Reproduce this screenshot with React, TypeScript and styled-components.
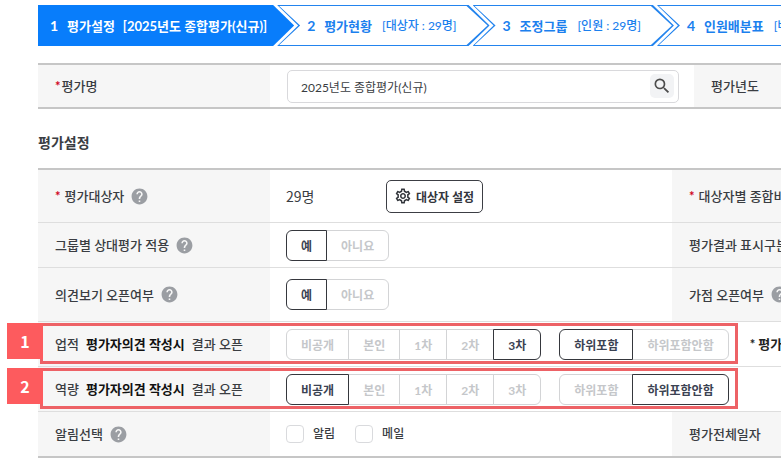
import React from "react";
import styled, { createGlobalStyle, css } from "styled-components";
import { MdHelp, MdOutlineSettings, MdSearch } from "react-icons/md";

const GlobalStyle = createGlobalStyle`
  *, *::before, *::after { box-sizing: border-box; }
  body {
    margin: 0;
    background: #fff;
    color: #3a3d42;
    font-family: Lato, "Noto Sans CJK KR", sans-serif;
    font-size: 13px;
    line-height: 20px;
    overflow-x: hidden;
  }
  button, input { font-family: inherit; }
`;

const Page = styled.main`
  min-width: 1120px;
  padding: 5px 0 14px 38px;
`;

const Steps = styled.nav`
  display: flex;
  margin-bottom: 17px;
`;

const arrow = css`
  clip-path: polygon(0 0, calc(100% - 21px) 0, 100% 50%, calc(100% - 21px) 100%, 0 100%, 21px 50%);
`;

const StepNumber = styled.span`
  position: relative;
  width: 17px;
  font-size: 14px;
`;

const StepTitle = styled.span`
  position: relative;
  margin-right: 10px;
`;

const StepDetail = styled.span`
  position: relative;
  font-size: 12px;
  font-weight: 500;
`;

const Step = styled.a<{ $active?: boolean }>`
  position: relative;
  display: flex;
  flex: none;
  align-items: center;
  height: 41px;
  padding: 0 33px 0 30px;
  background: #2384ee;
  color: #1b80ee;
  font-weight: 700;
  text-decoration: none;
  white-space: nowrap;
  ${arrow}
  & + & { margin-left: -17px; }
  &::before {
    content: "";
    position: absolute;
    inset: 1px 2px;
    background: #fff;
    ${arrow}
  }
  ${(p) =>
    p.$active &&
    css`
      padding: 0 27px 0 12px;
      background: #087dfb;
      color: #fff;
      clip-path: polygon(0 0, calc(100% - 21px) 0, 100% 50%, calc(100% - 21px) 100%, 0 100%);
      &::before { display: none; }
      ${StepTitle} { margin-right: 8px; }
      ${StepDetail} { font-size: 13px; font-weight: 700; }
    `}
`;

const Panel = styled.section`
  border-top: 2px solid #c6c6c6;
  border-bottom: 2px solid #c6c6c6;
`;

const Row = styled.div<{ $height: number; $template?: string }>`
  position: relative;
  display: grid;
  grid-template-columns: ${(p) => p.$template ?? "232px 402px 232px 1fr"};
  min-height: ${(p) => p.$height}px;
  & + & { border-top: 1px solid #dedede; }
`;

const Label = styled.div`
  display: flex;
  align-items: center;
  padding-left: 17px;
  background: #f6f6f6;
  font-weight: 500;
  white-space: nowrap;
`;

const Value = styled.div`
  display: flex;
  align-items: center;
  padding: 0 15px 0 16px;
  white-space: nowrap;
`;

const Required = styled.span<{ $spaced?: boolean }>`
  margin-right: ${(p) => (p.$spaced ? 4 : 1)}px;
  color: #d0021b;
  font-weight: 700;
`;

const HelpButton = styled.button`
  display: flex;
  margin-left: 6px;
  padding: 0;
  border: 0;
  background: none;
  color: #9b9ea3;
`;

const Heading = styled.h2`
  margin: 24px 0 15px;
  font-size: 14px;
  line-height: 20px;
  font-weight: 700;
`;

const SearchBox = styled.div`
  display: flex;
  flex: 1;
  align-items: center;
  height: 33px;
  margin-left: 1px;
  padding: 0 4px 0 13px;
  border: 1px solid #d9d9dc;
  border-radius: 5px;
`;

const SearchInput = styled.input`
  flex: 1;
  min-width: 0;
  padding: 0;
  border: 0;
  outline: 0;
  background: none;
  color: #3a3d42;
  font-size: 12px;
`;

const SearchButton = styled.button`
  display: flex;
  align-items: center;
  justify-content: center;
  width: 24px;
  height: 24px;
  padding: 0;
  border: 0;
  border-radius: 5px;
  background: #f2f3f5;
  color: #4c4c4c;
`;

const Count = styled.span`
  width: 100px;
  font-family: "Noto Sans CJK KR", sans-serif;
  font-size: 14px;
`;

const SettingsButton = styled.button`
  display: flex;
  align-items: center;
  gap: 4px;
  height: 33px;
  padding: 0 8px 0 7px;
  border: 1px solid #3c3e44;
  border-radius: 5px;
  background: #fff;
  color: #33363c;
  font-size: 12px;
  font-weight: 700;
`;

const Segments = styled.div`
  display: flex;
  & + & { margin-left: 18px; }
`;

const Segment = styled.button<{ $on?: boolean }>`
  position: relative;
  z-index: ${(p) => (p.$on ? 1 : 0)};
  height: 31px;
  padding: 0 14px;
  border: 1px solid ${(p) => (p.$on ? "#35373d" : "#d3d4d6")};
  background: #fff;
  color: ${(p) => (p.$on ? "#3b4252" : "#c5c7ca")};
  font-size: 12px;
  font-weight: 700;
  & + & { margin-left: -1px; }
  &:first-child { border-radius: 6px 0 0 6px; }
  &:last-child { border-radius: 0 6px 6px 0; }
`;

const Phrase = styled.span`
  display: flex;
  gap: 7px;
`;

const Emphasis = styled.strong`
  color: #111;
  font-weight: 700;
`;

const Note = styled.strong`
  margin-left: 21px;
  color: #222;
`;

const CheckLabel = styled.label`
  display: flex;
  align-items: center;
  gap: 9px;
  margin-right: 20px;
  font-size: 12px;
  font-weight: 500;
`;

const CheckBox = styled.input`
  appearance: none;
  width: 18px;
  height: 18px;
  margin: 0;
  border: 1px solid #d9dadd;
  border-radius: 4px;
  background: #fff;
  &:checked { background: #087dfb; }
`;

const Callout = styled.div`
  position: absolute;
  z-index: 2;
  top: 1px;
  left: 2px;
  width: 698px;
  height: 41px;
  border: 3px solid #ed6266;
  pointer-events: none;
`;

const CalloutNumber = styled.span`
  position: absolute;
  top: -3px;
  left: -36px;
  width: 36px;
  height: 36px;
  background: #fd5b5e;
  color: #fff;
  font: 700 16px/36px "Noto Sans CJK KR", sans-serif;
  text-align: center;
`;

const Help = ({ about }: { about: string }) => (
  <HelpButton type="button" aria-label={`${about} 도움말`}>
    <MdHelp size={19} />
  </HelpButton>
);

const SegmentGroup = ({ name, options, selected }: { name: string; options: string[]; selected: string }) => {
  const [value, setValue] = React.useState(selected);
  return (
    <Segments role="group" aria-label={name}>
      {options.map((o) => (
        <Segment key={o} type="button" $on={o === value} aria-pressed={o === value} onClick={() => setValue(o)}>
          {o}
        </Segment>
      ))}
    </Segments>
  );
};

const steps = [
  { title: "평가설정", detail: "[2025년도 종합평가(신규)]" },
  { title: "평가현황", detail: "[대상자 : 29명]" },
  { title: "조정그룹", detail: "[인원 : 29명]" },
  { title: "인원배분표", detail: "[배분]" },
];

const openRows = [
  { subject: "업적", stage: "3차", scope: "하위포함", note: "* 평가" },
  { subject: "역량", stage: "비공개", scope: "하위포함안함", note: "" },
];

export default function App() {
  return (
    <>
      <GlobalStyle />
      <Page>
        <Steps>
          {steps.map((s, i) => (
            <Step key={s.title} href="#" $active={i === 0}>
              <StepNumber>{i + 1}</StepNumber>
              <StepTitle>{s.title}</StepTitle>
              <StepDetail>{s.detail}</StepDetail>
            </Step>
          ))}
        </Steps>

        <Panel>
          <Row $height={42} $template="232px 424px 232px 1fr">
            <Label as="label" htmlFor="evaluation-name">
              <Required>*</Required>평가명
            </Label>
            <Value>
              <SearchBox>
                <SearchInput id="evaluation-name" defaultValue="2025년도 종합평가(신규)" />
                <SearchButton type="button" aria-label="검색">
                  <MdSearch size={20} />
                </SearchButton>
              </SearchBox>
            </Value>
            <Label>평가년도</Label>
            <Value />
          </Row>
        </Panel>

        <Heading>평가설정</Heading>

        <Panel>
          <Row $height={52}>
            <Label>
              <Required $spaced>*</Required>평가대상자
              <Help about="평가대상자" />
            </Label>
            <Value>
              <Count>29명</Count>
              <SettingsButton type="button">
                <MdOutlineSettings size={18} />
                대상자 설정
              </SettingsButton>
            </Value>
            <Label>
              <Required $spaced>*</Required>대상자별 종합비중
            </Label>
            <Value />
          </Row>
          <Row $height={45}>
            <Label>
              그룹별 상대평가 적용
              <Help about="그룹별 상대평가 적용" />
            </Label>
            <Value>
              <SegmentGroup name="그룹별 상대평가 적용" options={["예", "아니요"]} selected="예" />
            </Value>
            <Label>평가결과 표시구분</Label>
            <Value />
          </Row>
          <Row $height={54}>
            <Label>
              의견보기 오픈여부
              <Help about="의견보기 오픈여부" />
            </Label>
            <Value>
              <SegmentGroup name="의견보기 오픈여부" options={["예", "아니요"]} selected="예" />
            </Value>
            <Label>
              가점 오픈여부
              <Help about="가점 오픈여부" />
            </Label>
            <Value />
          </Row>
          {openRows.map((r, i) => (
            <Row key={r.subject} $height={45} $template="232px 1fr">
              <Label>
                <Phrase>
                  {r.subject}
                  <Emphasis>평가자의견 작성시</Emphasis>
                  <span>결과 오픈</span>
                </Phrase>
              </Label>
              <Value>
                <SegmentGroup
                  name={`${r.subject} 결과 오픈`}
                  options={["비공개", "본인", "1차", "2차", "3차"]}
                  selected={r.stage}
                />
                <SegmentGroup name={`${r.subject} 범위`} options={["하위포함", "하위포함안함"]} selected={r.scope} />
                {r.note && <Note>{r.note}</Note>}
              </Value>
              <Callout>
                <CalloutNumber>{i + 1}</CalloutNumber>
              </Callout>
            </Row>
          ))}
          <Row $height={45}>
            <Label>
              알림선택
              <Help about="알림선택" />
            </Label>
            <Value>
              <CheckLabel>
                <CheckBox type="checkbox" />
                알림
              </CheckLabel>
              <CheckLabel>
                <CheckBox type="checkbox" />
                메일
              </CheckLabel>
            </Value>
            <Label>평가전체일자</Label>
            <Value />
          </Row>
        </Panel>
      </Page>
    </>
  );
}
